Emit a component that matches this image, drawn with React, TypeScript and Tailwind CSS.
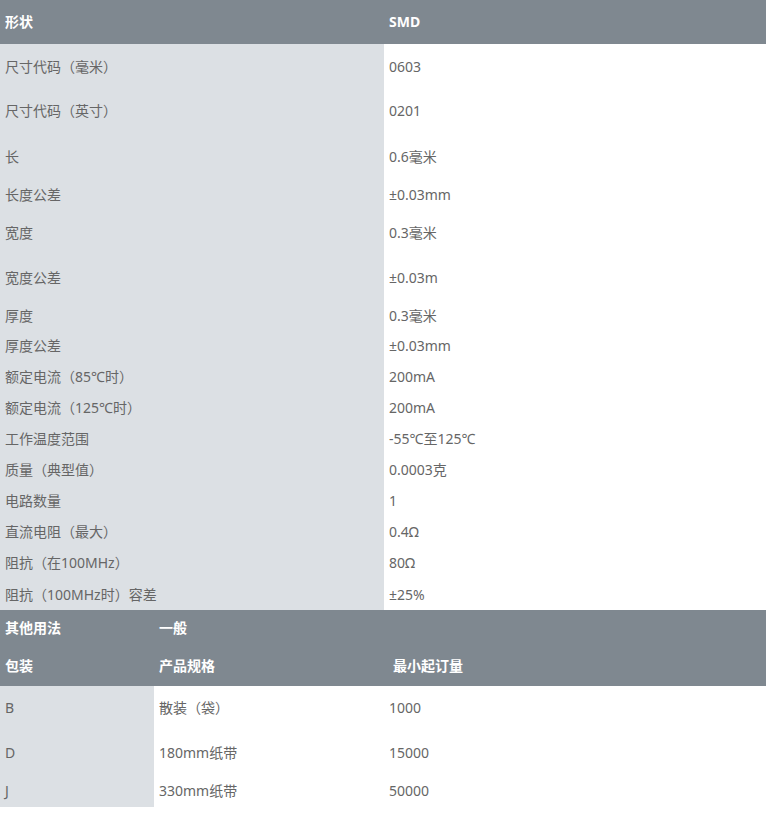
const specs: { label: string; value: string; h: string; pt: string }[] = [
  { label: "尺寸代码（毫米）", value: "0603", h: "h-[45px]", pt: "pt-[13px]" },
  { label: "尺寸代码（英寸）", value: "0201", h: "h-[45px]", pt: "pt-[12px]" },
  { label: "长", value: "0.6毫米", h: "h-[42px]", pt: "pt-[13px]" },
  { label: "长度公差", value: "±0.03mm", h: "h-[38px]", pt: "pt-[9px]" },
  { label: "宽度", value: "0.3毫米", h: "h-[41px]", pt: "pt-[9px]" },
  { label: "宽度公差", value: "±0.03m", h: "h-[42px]", pt: "pt-[13px]" },
  { label: "厚度", value: "0.3毫米", h: "h-[34px]", pt: "pt-[9px]" },
  { label: "厚度公差", value: "±0.03mm", h: "h-[31px]", pt: "pt-[5px]" },
  { label: "额定电流（85℃时）", value: "200mA", h: "h-[31px]", pt: "pt-[5px]" },
  { label: "额定电流（125℃时）", value: "200mA", h: "h-[31px]", pt: "pt-[5px]" },
  { label: "工作温度范围", value: "-55℃至125℃", h: "h-[31px]", pt: "pt-[5px]" },
  { label: "质量（典型值）", value: "0.0003克", h: "h-[31px]", pt: "pt-[5px]" },
  { label: "电路数量", value: "1", h: "h-[31px]", pt: "pt-[5px]" },
  { label: "直流电阻（最大）", value: "0.4Ω", h: "h-[31px]", pt: "pt-[5px]" },
  { label: "阻抗（在100MHz）", value: "80Ω", h: "h-[31px]", pt: "pt-[5px]" },
  { label: "阻抗（100MHz时）容差", value: "±25%", h: "h-[31px]", pt: "pt-[6px]" },
];

const packs: { code: string; spec: string; moq: string; h: string; pt: string }[] = [
  { code: "B", spec: "散装（袋）", moq: "1000", h: "h-[45px]", pt: "pt-[12px]" },
  { code: "D", spec: "180mm纸带", moq: "15000", h: "h-[45px]", pt: "pt-[12px]" },
  { code: "J", spec: "330mm纸带", moq: "50000", h: "h-[31px]", pt: "pt-[5px]" },
];

export default function App() {
  return (
    <div className="w-[766px] min-h-[813px] bg-white text-[14px] leading-[20px] text-[#666666] font-['Noto_Sans','Noto_Sans_CJK_SC',sans-serif]">
      {/* spec table */}
      <div className="flex h-[44px] items-center bg-[#7f8890] font-bold text-white">
        <div className="w-[384px] pl-[5px]">形状</div>
        <div className="pl-[5px]">SMD</div>
      </div>
      {specs.map((row) => (
        <div key={row.label} className={`flex ${row.h}`}>
          <div className={`w-[384px] bg-[#dce0e4] pl-[5px] ${row.pt}`}>{row.label}</div>
          <div className={`pl-[5px] ${row.pt}`}>{row.value}</div>
        </div>
      ))}

      {/* packaging table */}
      <div className="bg-[#7f8890] font-bold text-white">
        <div className="flex h-[36px] items-center">
          <div className="w-[154px] pl-[5px]">其他用法</div>
          <div className="pl-[5px]">一般</div>
        </div>
        <div className="flex h-[40px] items-center">
          <div className="w-[154px] pl-[5px]">包装</div>
          <div className="w-[230px] pl-[5px]">产品规格</div>
          <div className="pl-[9px]">最小起订量</div>
        </div>
      </div>
      {packs.map((row) => (
        <div key={row.code} className={`flex ${row.h}`}>
          <div className={`w-[154px] bg-[#dce0e4] pl-[5px] ${row.pt}`}>{row.code}</div>
          <div className={`w-[230px] pl-[5px] ${row.pt}`}>{row.spec}</div>
          <div className={`pl-[5px] ${row.pt}`}>{row.moq}</div>
        </div>
      ))}
    </div>
  );
}
